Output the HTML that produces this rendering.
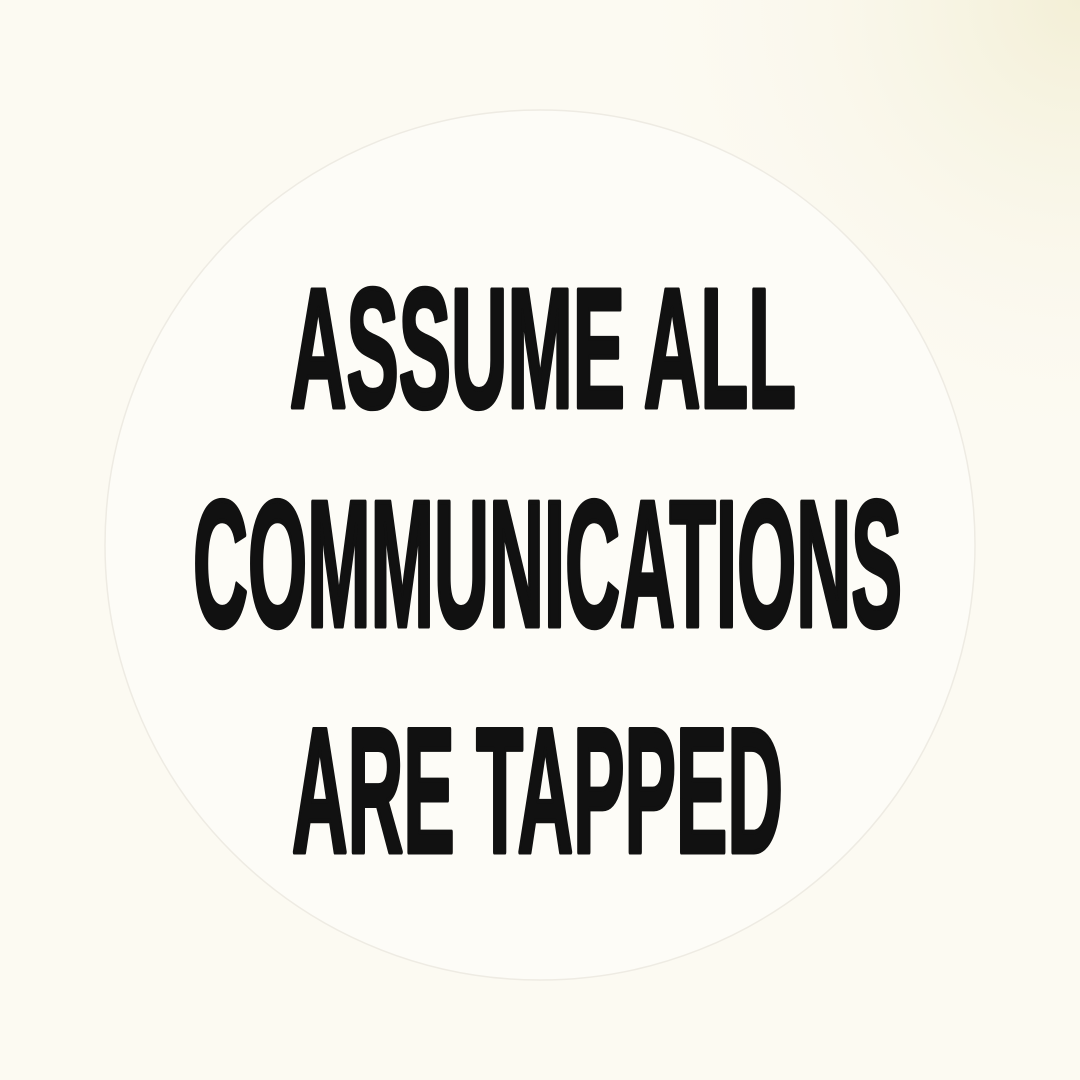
<!DOCTYPE html>
<html><head><meta charset="utf-8"><style>
html,body{margin:0;padding:0;width:1080px;height:1080px;overflow:hidden;background:#fcfaf2}
svg{display:block}
</style></head><body>
<svg width="1080" height="1080" viewBox="0 0 1080 1080">
<defs>
<radialGradient id="tint" cx="1" cy="0" r="0.45">
<stop offset="0" stop-color="#f3efd6"/><stop offset="1" stop-color="#fcfaf2" stop-opacity="0"/>
</radialGradient>
</defs>
<rect width="1080" height="1080" fill="#fcfaf2"/>
<rect width="1080" height="1080" fill="url(#tint)"/>
<circle cx="540" cy="545" r="435" fill="#fdfcf7" stroke="#eeebe3" stroke-width="1.5"/>
<g font-family="Liberation Sans, sans-serif" font-weight="bold" fill="#111" stroke="#111" stroke-width="5" stroke-linejoin="round">
<text x="290" y="407" font-size="170" textLength="506" lengthAdjust="spacingAndGlyphs">ASSUME ALL</text>
<text x="193" y="626" font-size="180" textLength="709" lengthAdjust="spacingAndGlyphs">COMMUNICATIONS</text>
<text x="292" y="852" font-size="178" textLength="491" lengthAdjust="spacingAndGlyphs">ARE TAPPED</text>
</g>
</svg>
</body></html>
